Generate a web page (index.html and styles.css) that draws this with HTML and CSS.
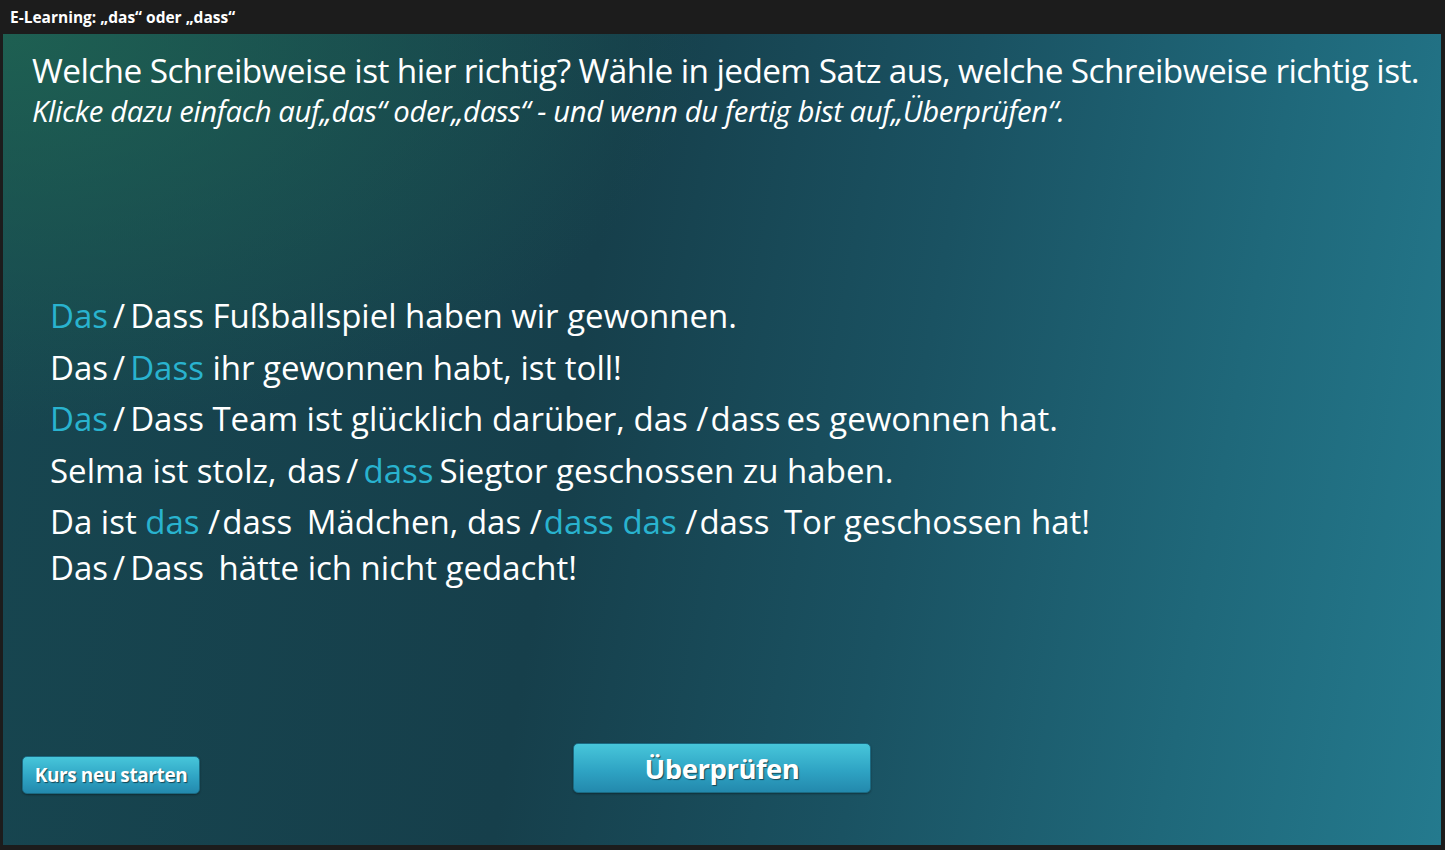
FILE: index.html
```html
<!DOCTYPE html>
<html>
<head>
  <title>E-Learning: „das“ oder „dass“</title>
  <link rel="stylesheet" href="styles.css">
</head>
<body>
  <div class="titlebar">E-Learning: „das“ oder „dass“</div>
  <div class="stage">
    <div class="intro">
      <h1>Welche Schreibweise ist hier richtig? Wähle in jedem Satz aus, welche Schreibweise richtig ist.</h1>
      <p>Klicke dazu einfach auf„das“ oder„dass“ - und wenn du fertig bist auf„Überprüfen“.</p>
    </div>

    <div class="sentences">
      <div class="line"><span class="pick on">Das</span><span class="slash">/</span><span class="pick">Dass</span> Fußballspiel haben wir gewonnen.</div>
      <div class="line"><span class="pick">Das</span><span class="slash">/</span><span class="pick on">Dass</span> ihr gewonnen habt, ist toll!</div>
      <div class="line"><span class="pick on">Das</span><span class="slash">/</span><span class="pick">Dass</span> Team ist glücklich darüber, <span class="pick">das</span> <span class="slash tight">/</span><span class="pick">dass</span><span class="near">es gewonnen hat.</span></div>
      <div class="line">Selma ist stolz, <span class="pick gap">das</span><span class="slash">/</span><span class="pick on">dass</span><span class="near">Siegtor geschossen zu haben.</span></div>
      <div class="line">Da ist <span class="pick on">das</span> <span class="slash tight">/</span><span class="pick">dass</span> <span class="gap">Mädchen,</span> <span class="pick">das</span> <span class="slash tight">/</span><span class="pick on">dass</span> <span class="pick on">das</span> <span class="slash tight">/</span><span class="pick">dass</span> <span class="gap">Tor geschossen hat!</span></div>
      <div class="line last"><span class="pick">Das</span><span class="slash">/</span><span class="pick">Dass</span> <span class="gap">hätte ich nicht gedacht!</span></div>
    </div>

    <div class="actions">
      <button class="btn small">Kurs neu starten</button>
      <button class="btn big">Überprüfen</button>
      <div></div>
    </div>
  </div>
</body>
</html>
```

FILE: styles.css
```css
body {
  margin: 0;
  background-color: #1c1c1c;
  font-family: "Open Sans", "Noto Sans", sans-serif;
  color: #ffffff;
}
.titlebar {
  height: 34px;
  line-height: 35px;
  padding-left: 10px;
  font-size: 15.5px;
  font-weight: bold;
}
.stage {
  height: 811px;
  margin: 0 4px 0 3px;
  display: flex;
  flex-direction: column;
  background:
    radial-gradient(ellipse 700px 400px at 0 0, rgba(31, 100, 82, 0.85), rgba(31, 100, 82, 0) 100%),
    linear-gradient(100deg, #174650 0%, #163f4b 40%, #1a5262 62%, #1f687a 82%, #247a8e 100%);
}
.intro {
  padding: 17px 0 0 29px;
}
.intro h1 {
  margin: 0;
  font-size: 33.4px;
  font-weight: normal;
  letter-spacing: -0.6px;
  line-height: 38px;
  white-space: nowrap;
}
.intro p {
  margin: 4px 0 0;
  font-size: 29.3px;
  font-style: italic;
  letter-spacing: -0.4px;
  line-height: 36px;
  white-space: nowrap;
}
.sentences {
  margin-top: 161px;
  padding-left: 47px;
  font-size: 33px;
  line-height: 51.5px;
}
.line {
  white-space: nowrap;
}
.line.last {
  margin-top: -6px;
}
.pick.on {
  color: #29b3cf;
}
.slash {
  margin: 0 5px;
}
.slash.tight {
  margin-left: 0;
  margin-right: 2px;
}
.gap {
  margin-left: 6px;
}
.pick.gap {
  margin-left: 2px;
}
.near {
  margin-left: 6px;
}
.actions {
  margin-top: auto;
  padding-bottom: 52px;
  display: grid;
  grid-template-columns: 1fr auto 1fr;
  align-items: end;
}
.btn {
  border: 1px solid #1b6a82;
  border-radius: 5px;
  background: linear-gradient(#47c6da, #2fa4c4 55%, #2389ad);
  color: #ffffff;
  font-family: "Open Sans", sans-serif;
  font-weight: bold;
  text-shadow: 1px 1px 1px rgba(0, 0, 0, 0.55);
  box-shadow: 0 1px 2px rgba(0, 0, 0, 0.35);
  cursor: pointer;
  padding: 0;
}
.btn.small {
  justify-self: start;
  margin-left: 19px;
  margin-bottom: -1px;
  width: 178px;
  height: 38px;
  font-size: 19px;
  letter-spacing: -0.4px;
}
.btn.big {
  width: 298px;
  height: 50px;
  font-size: 27.5px;
  letter-spacing: -0.5px;
}
```
